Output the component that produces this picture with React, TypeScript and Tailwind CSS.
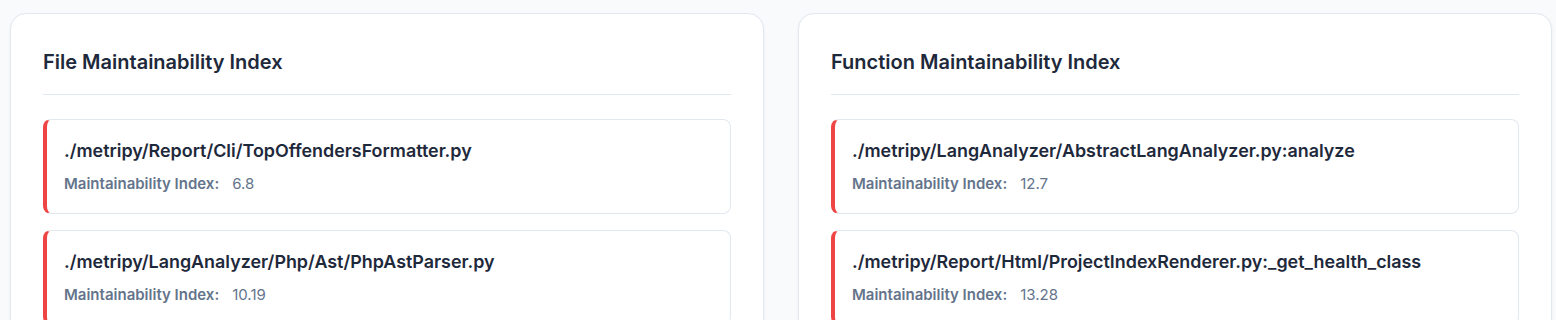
import React from "react";

const fileItems = [
  { path: "./metripy/Report/Cli/TopOffendersFormatter.py", value: "6.8" },
  { path: "./metripy/LangAnalyzer/Php/Ast/PhpAstParser.py", value: "10.19" },
];

const functionItems = [
  { path: "./metripy/LangAnalyzer/AbstractLangAnalyzer.py:analyze", value: "12.7" },
  { path: "./metripy/Report/Html/ProjectIndexRenderer.py:_get_health_class", value: "13.28" },
];

const Panel = ({ title, items }: { title: string; items: { path: string; value: string }[] }) => (
  <div className="bg-white rounded-2xl border border-[#e2e8f0] shadow-[0_1px_3px_rgba(15,23,42,0.06)] px-8 pt-[34px] pb-6">
    <h2 className="text-xl font-semibold text-[#1e293b] leading-7 pb-[18px] border-b border-[#e2e8f0]">{title}</h2>
    <div className="mt-6 flex flex-col gap-4">
      {items.map((item, i) => (
        <div key={i} className="border border-[#e2e8f0] border-l-4 border-l-[#ef4444] rounded-lg pl-[17px] pr-5 pt-[19px] pb-[19px]">
          <div className="text-[17.9px] font-semibold text-[#1e293b] leading-6">{item.path}</div>
          <div className="mt-[11px] text-[15px] leading-5 text-[#64748b]">
            <span className="font-semibold mr-[13px]">Maintainability Index:</span>
            <span>{item.value}</span>
          </div>
        </div>
      ))}
    </div>
  </div>
);

const App = () => {
  return (
    <div className="min-h-screen bg-[#f8fafc] pl-[10px] pr-1 pt-[13px] font-['Inter',sans-serif]">
      <div className="grid grid-cols-[754px_754px] gap-[34px]">
        <Panel title="File Maintainability Index" items={fileItems} />
        <Panel title="Function Maintainability Index" items={functionItems} />
      </div>
    </div>
  );
};

export default App;
